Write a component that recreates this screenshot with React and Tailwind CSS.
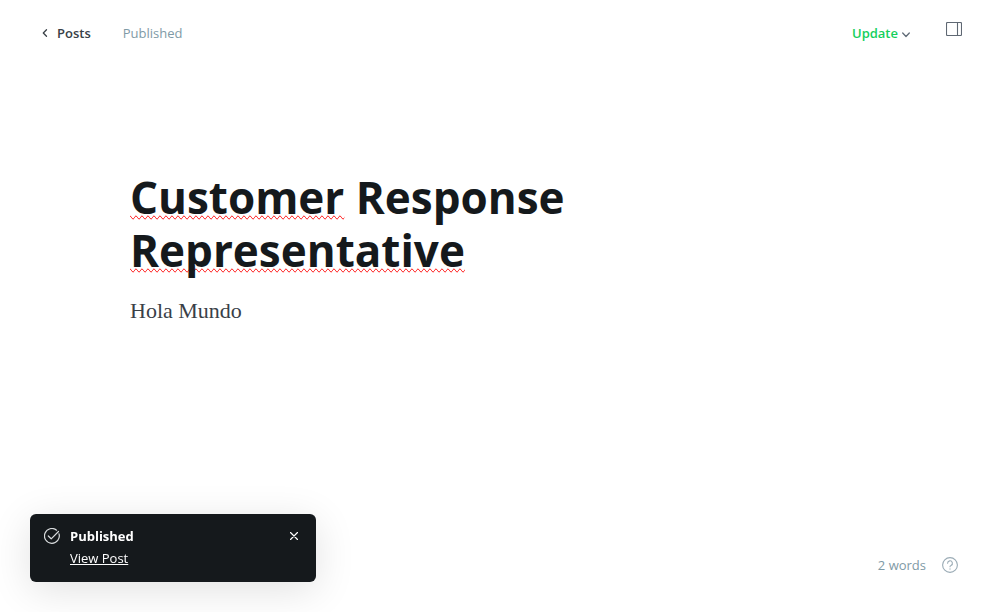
import React from "react";

function Misspelled({ children }) {
  return <span className="[text-decoration-line:spelling-error] [text-decoration-skip-ink:none]">{children}</span>;
}

function Header() {
  return (
    <header className="flex h-[66px] items-center justify-between pr-[38px] pl-10 text-[13px] leading-5">
      <nav className="flex items-center gap-8">
        <a href="#posts" className="flex items-center gap-2 font-semibold text-[#394047]">
          <svg width="9" height="10" viewBox="0 0 9 10" fill="none" stroke="currentColor" strokeWidth="1.3" strokeLinecap="round" strokeLinejoin="round" aria-hidden="true">
            <path d="M6.500 1.800 3.300 5l3.200 3.200" />
          </svg>
          Posts
        </a>
        <span className="text-[#7f9aa6]">Published</span>
      </nav>
      <div className="flex items-center gap-9">
        <button type="button" className="flex items-center gap-1 font-semibold text-[#14cf5c]">
          Update
          <svg className="mt-1" width="8" height="6" viewBox="0 0 8 6" fill="none" stroke="#626d79" strokeWidth="1.3" strokeLinecap="round" strokeLinejoin="round" aria-hidden="true">
            <path d="M.7 1 4 4.500 7.300 1" />
          </svg>
        </button>
        <button type="button" aria-label="Settings" className="mb-2">
          <svg width="16" height="14" viewBox="0 0 16 14" fill="none" stroke="#5f6873" strokeWidth="1.1" aria-hidden="true">
            <rect x=".5" y=".5" width="15" height="13" rx="1" />
            <path d="M11.500.5v13" />
          </svg>
        </button>
      </div>
    </header>
  );
}

function Toast() {
  return (
    <aside role="status" className="fixed bottom-[30px] left-[30px] flex h-[68px] w-[286px] items-start rounded-md bg-[#15191c] px-3.5 pt-3 text-white shadow-[0_8px_40px_rgba(0,0,0,0.12)]">
      <svg className="mt-0.5" width="16" height="16" viewBox="0 0 16 16" fill="none" stroke="#d8dbdd" strokeWidth="1.2" strokeLinecap="round" strokeLinejoin="round" aria-hidden="true">
        <path d="M15 5.800A7.400 7.400 0 1 1 12.600 2.200" />
        <path d="m4.300 8 2.900 2.800 7.300-7.300" />
      </svg>
      <div className="ml-2.5 flex flex-1 flex-col items-start gap-0.5 text-[13px] leading-5">
        <strong className="font-bold">Published</strong>
        <a href="#post" className="underline">View Post</a>
      </div>
      <button type="button" aria-label="Close" className="mt-1.5 mr-1">
        <svg width="8" height="8" viewBox="0 0 8 8" stroke="#fff" strokeWidth="1.2" strokeLinecap="round" aria-hidden="true">
          <path d="m.5.5 7 7m0-7-7 7" />
        </svg>
      </button>
    </aside>
  );
}

export default function App() {
  return (
    <div className="flex min-h-screen flex-col bg-white font-['Open_Sans','Noto_Sans',sans-serif]">
      <Header />
      <main className="mx-auto w-full max-w-[740px] flex-1 pt-[105px]">
        <h1 contentEditable suppressContentEditableWarning spellCheck={false} className="text-[44px] leading-[53px] font-bold text-[#15191c] outline-none">
          <Misspelled>Customer</Misspelled> Response <br />
          <Misspelled>Representative</Misspelled>
        </h1>
        <p contentEditable suppressContentEditableWarning spellCheck={false} className="mt-[18px] font-['Liberation_Serif',serif] text-[22px] leading-8 text-[#394047] outline-none">
          Hola Mundo
        </p>
      </main>
      <footer className="flex items-center justify-end gap-4 pr-[42px] pb-[37px] text-[13px] leading-5 text-[#7f9aa6]">
        <span>2 words</span>
        <button type="button" aria-label="Help">
          <svg width="16" height="16" viewBox="0 0 16 16" fill="none" stroke="#9aabb5" strokeWidth="1.1" strokeLinecap="round" strokeLinejoin="round" aria-hidden="true">
            <circle cx="8" cy="8" r="7.400" />
            <path d="M5.600 6.200a2.400 2.400 0 1 1 3.400 2.200c-.7.300-1 .7-1 1.400" />
            <circle cx="8" cy="11.900" r=".2" />
          </svg>
        </button>
      </footer>
      <Toast />
    </div>
  );
}
